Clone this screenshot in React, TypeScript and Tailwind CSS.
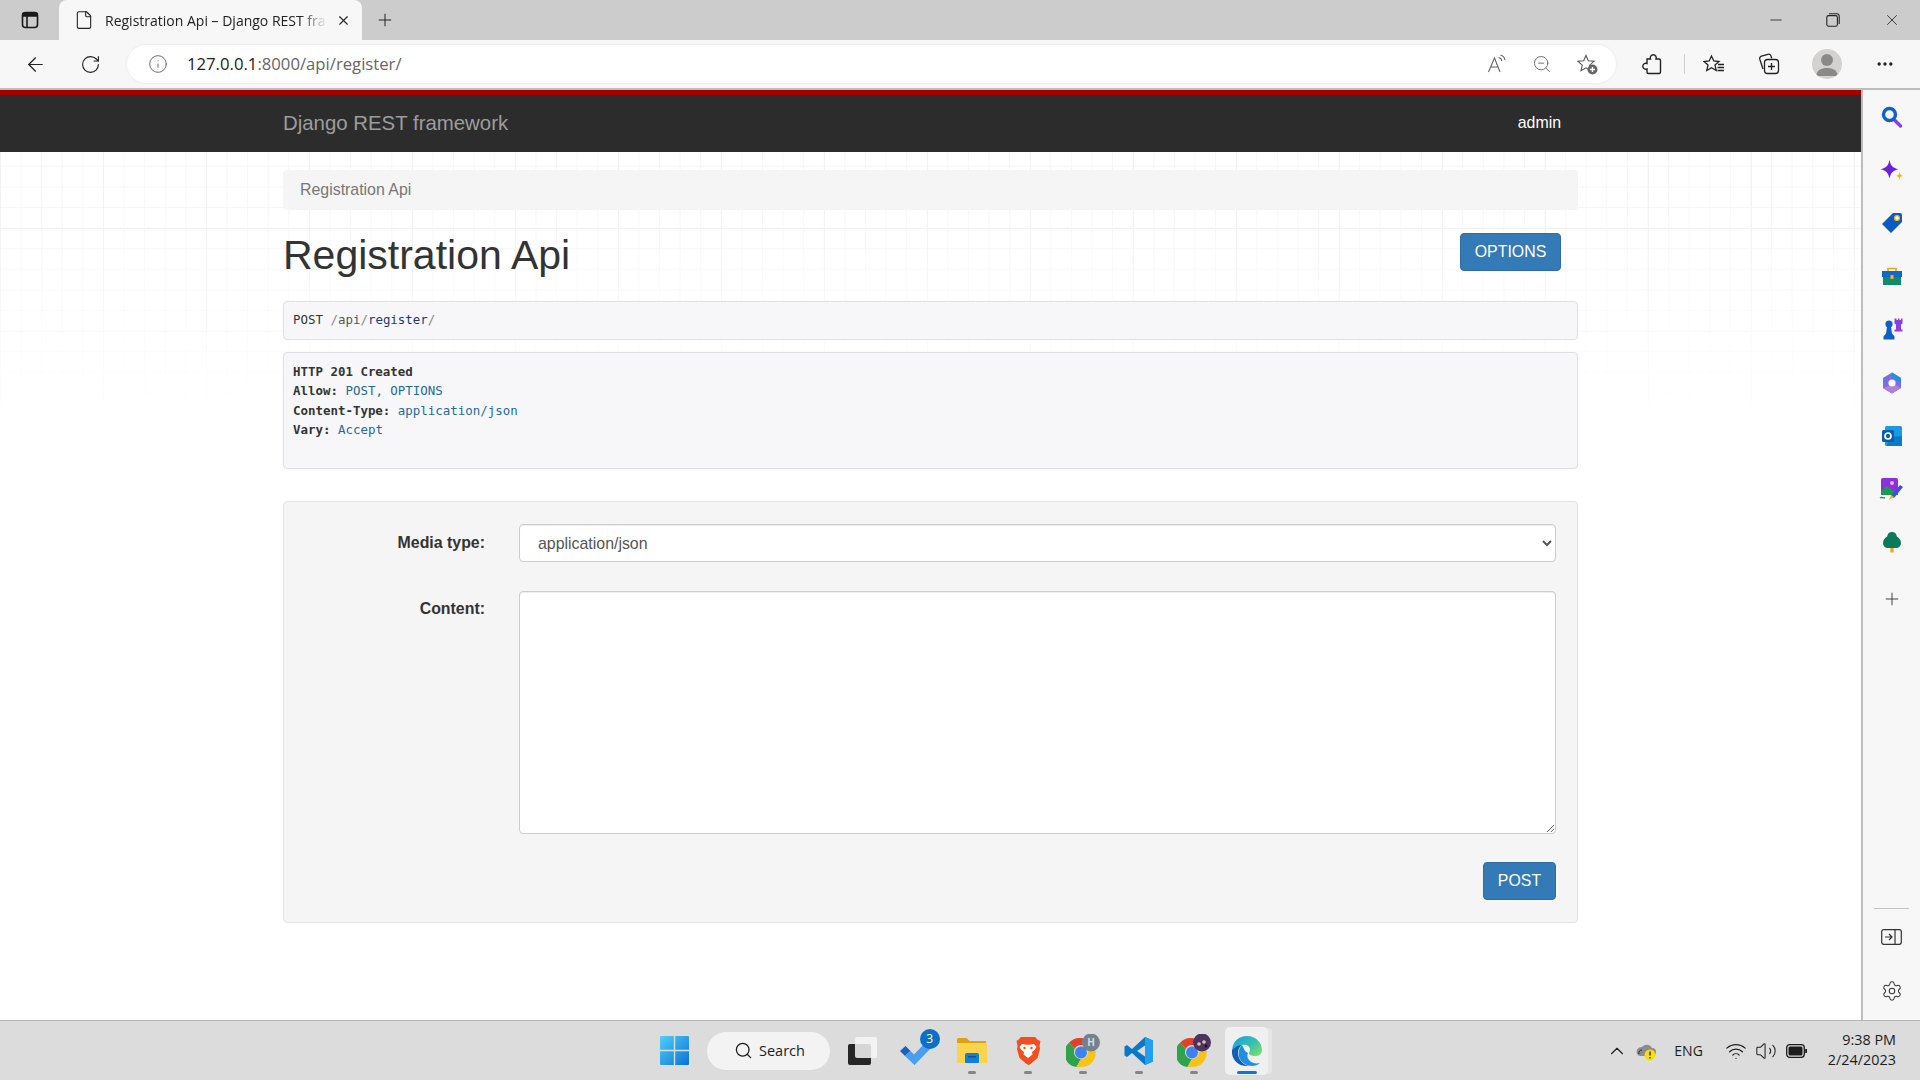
import { ReactNode } from 'react';
import { ArrowLeft, RotateCw, Info, ZoomOut, Settings, Plus, X, Minus, Search, ChevronUp, Wifi, Volume2, File, Ellipsis } from 'lucide-react';

// edge chrome -----------------------------------------------------------

function TabStrip() {
  return (
    <div className="flex h-[40px] shrink-0 items-end bg-[#cccccc] font-['Open_Sans',sans-serif] text-[#222]">
      <div className="flex h-[40px] w-[59px] items-center justify-center pb-[1px]">
        <svg width="18" height="18" viewBox="0 0 18 18" fill="none" stroke="#1a1a1a" strokeWidth="1.6">
          <rect x="1.5" y="1.5" width="15" height="15" rx="3" />
          <path d="M2 5h14V2.5H2z" fill="#1a1a1a" />
          <path d="M6 5v11" />
        </svg>
      </div>
      <div className="flex h-[40px] w-[303px] items-center rounded-t-[8px] bg-[#f7f7f7] pl-[15px]">
        <File size={20} strokeWidth={1.3} color="#222" />
        <span className="ml-[11px] w-[222px] overflow-hidden whitespace-nowrap text-[14px] [mask-image:linear-gradient(to_right,#000_88%,transparent_100%)]">
          Registration Api – Django REST framework
        </span>
        <X size={15} strokeWidth={1.8} className="ml-[9px]" />
      </div>
      <div className="flex h-[40px] w-[46px] items-center justify-center">
        <Plus size={20} strokeWidth={1.2} />
      </div>
      <div className="ml-auto flex h-[40px] items-center pr-[19px]">
        <Minus size={18} strokeWidth={1.1} className="mr-[41px]" />
        <svg width="14" height="14" viewBox="0 0 14 14" fill="none" stroke="#222" strokeWidth="1.1" className="mr-[43px]">
          <rect x="0.8" y="2.6" width="10.6" height="10.6" rx="1.8" />
          <path d="M3 .8h8a2.2 2.2 0 0 1 2.2 2.2v8" />
        </svg>
        <X size={18} strokeWidth={1.1} />
      </div>
    </div>
  );
}

function AddressBar() {
  return (
    <div className="flex h-[50px] shrink-0 items-start border-b-[2px] border-[#bdbdbd] bg-[#f7f7f7] font-['Open_Sans',sans-serif] text-[#222]">
      <div className="flex h-[48px] items-center pl-[24px]">
        <ArrowLeft size={23} strokeWidth={1.3} />
        <RotateCw size={21} strokeWidth={1.3} className="ml-[33px]" />
      </div>
      <div className="ml-[26px] mt-[5px] flex h-[38px] w-[1489px] items-center rounded-[19px] bg-white pl-[21px] shadow-[0_0_3px_rgba(0,0,0,0.08)]">
        <Info size={20} strokeWidth={1} color="#555" />
        <span className="ml-[19px] text-[16.7px]">
          127.0.0.1<span className="text-[#666]">:8000/api/register/</span>
        </span>
        <div className="ml-auto flex items-center gap-[25px] pr-[18px]">
          <svg width="20" height="20" viewBox="0 0 20 20" fill="none" stroke="#666" strokeWidth="1.1">
            <path d="M1.5 18 7.5 4l5.500 14M3.800 13h7.600" />
            <path d="M11.500 3.500c1.800.4 3 1.800 3.300 3.500M13.500 1c2.500.7 4 2.600 4.500 5" />
          </svg>
          <ZoomOut size={20} strokeWidth={1.1} color="#666" />
          <svg width="21" height="21" viewBox="0 0 21 21" fill="none" stroke="#555" strokeWidth="1.1">
            <path d="M9 1.500 11.300 6.800l5.700.5-4.300 3.800 1.300 5.600L9 13.800l-5 2.900 1.300-5.600L1 7.300l5.700-.5z" />
            <circle cx="15.500" cy="15.500" r="5" fill="#666" stroke="none" />
            <path d="M15.500 13v5M13 15.500h5" stroke="#fff" strokeWidth="1.300" />
          </svg>
        </div>
      </div>
      <div className="flex h-[48px] items-center">
        <svg width="22" height="22" viewBox="0 0 22 22" fill="none" stroke="#222" strokeWidth="1.400" className="ml-[25px]">
          <path d="M6 6h3.500a3 3 0 1 1 5.500 0H18a1.500 1.500 0 0 1 1.500 1.500V19a1.500 1.500 0 0 1-1.500 1.500H7.500A1.500 1.500 0 0 1 6 19v-3a3 3 0 1 1 0-5.500z" />
        </svg>
        <div className="ml-[21px] h-[20px] w-px bg-[#cfcfcf]" />
        <svg width="22" height="21" viewBox="0 0 22 21" fill="none" stroke="#222" strokeWidth="1.3" className="ml-[18px]">
          <path d="M8.500 2 10.800 7l5.200.5-4 3.600 1.200 5.400-4.700-2.800-4.700 2.800 1.200-5.400-4-3.600L6.200 7z" />
          <path d="M15 10.500h6M14.500 13.500h6.500M14.500 16.500h6.500" />
        </svg>
        <svg width="22" height="22" viewBox="0 0 22 22" fill="none" stroke="#222" strokeWidth="1.3" className="ml-[33px]">
          <path d="M5 16 1.800 6.200a2.500 2.500 0 0 1 1.700-3.100l6.400-1.800a2.500 2.500 0 0 1 3 1.600l.8 2.400" />
          <rect x="6.500" y="6.500" width="14" height="14" rx="3" />
          <path d="M13.500 10v7M10 13.500h7" />
        </svg>
        <div className="ml-[32px] flex h-[30px] w-[30px] items-center justify-center overflow-hidden rounded-full bg-[#d3d2d0]">
          <svg width="30" height="30" viewBox="0 0 30 30" fill="#8b8986">
            <circle cx="15" cy="11" r="6" />
            <path d="M4 27c1-6 5-8 11-8s10 2 11 8z" />
          </svg>
        </div>
        <Ellipsis size={20} strokeWidth={2} className="ml-[33px]" />
      </div>
    </div>
  );
}

// right side bar ----------------------------------------------------------

const sideIcons: ReactNode[] = [
  <svg key="search" width="22" height="22" viewBox="0 0 22 22" fill="none">
    <path d="M13 13.500 19.500 20" stroke="#8a3ee0" strokeWidth="3.400" strokeLinecap="round" />
    <circle cx="8.500" cy="8.500" r="6" stroke="#0f5fd0" strokeWidth="3.400" />
  </svg>,
  <svg key="spark" width="24" height="22" viewBox="1.500 1.500 21.500 19.500">
    <path d="M10 2c1 5.500 3 7.400 8 8.500-5 1.200-7 3-8 8.700-1-5.700-3-7.500-8-8.700 5-1.100 7-3 8-8.500z" fill="#6b21d8" />
    <path d="M19 13c.4 2.200 1.200 3 3.400 3.500-2.200.5-3 1.300-3.400 3.500-.4-2.200-1.200-3-3.400-3.500 2.200-.5 3-1.300 3.400-3.500z" fill="#f5b50c" />
  </svg>,
  <svg key="tag" width="22" height="22" viewBox="0 0 22 22">
    <path d="M12 1h7a2 2 0 0 1 2 2v7L10 21 1 12z" fill="#0b5bc4" />
    <circle cx="16" cy="6" r="2.400" fill="#fff" stroke="#f5b50c" strokeWidth="1.400" />
  </svg>,
  <svg key="tools" width="22" height="20" viewBox="0 0 22 20">
    <path d="M7 5V2.500h8V5" fill="none" stroke="#e3a81c" strokeWidth="1.600" />
    <rect x="1" y="5" width="20" height="6" fill="#1266c9" />
    <rect x="2" y="11" width="18" height="8" fill="#0f8a6d" />
    <rect x="9.500" y="9" width="3" height="4" fill="#f5b50c" />
  </svg>,
  <svg key="chess" width="24" height="24" viewBox="0 0 24 24">
    <path d="M14.500 1.500h2v1.500h1.500V1.500h1.500V3H21V1.500h1.500v5l-1.500 1v5h1.500v2h-8v-2H16v-5l-1.500-1z" fill="#8b3fe0" />
    <circle cx="9" cy="7" r="3.600" fill="#0f5fc8" />
    <path d="M7 10h4l1 6.500 2.500 3v3H3.500v-3l2.500-3z" fill="#0f5fc8" />
  </svg>,
  <svg key="m365" width="22" height="24" viewBox="0 0 22 24" fill="none">
    <path d="M11 1.500 20 7v10l-9 5.500L2 17V7z" fill="#7b6ee0" />
    <path d="M11 1.500 20 7v5l-5-3-4-1.500z" fill="#2a8be0" />
    <path d="M2 17l9 5.500 9-5.500-5-3-8 1z" fill="#b17fd8" />
    <circle cx="11" cy="12" r="3.600" fill="#f7f7f7" />
  </svg>,
  <svg key="outlook" width="22" height="22" viewBox="0 0 22 22">
    <rect x="4" y="1" width="17" height="20" rx="1.500" fill="#1a9be0" />
    <path d="M8 12l13-1v10H6z" fill="#0f78c8" />
    <rect x="1" y="5" width="12" height="12" rx="1.500" fill="#0a5cb0" />
    <circle cx="7" cy="11" r="3" fill="none" stroke="#fff" strokeWidth="1.700" />
  </svg>,
  <svg key="paint" width="25" height="24" viewBox="0 0 25 24">
    <rect x="2" y="1" width="17" height="17" rx="2" fill="#8b2fe0" />
    <circle cx="13" cy="6" r="2" fill="#f3b0e0" />
    <path d="M2 14l6-5 11 8v1H2z" fill="#1a9a50" />
    <path d="M12 19 21 8l3 2-9 11z" fill="#3b50d8" />
    <path d="M10 23l2-5 3 2z" fill="#f0b020" />
    <path d="M1 21c2-2 3 1 5-.5" fill="none" stroke="#168a50" strokeWidth="1.200" />
  </svg>,
  <svg key="tree" width="22" height="22" viewBox="0 0 22 22">
    <rect x="9.300" y="15" width="3.400" height="6.500" fill="#f0a818" />
    <path d="M11 1c3 0 4.500 2 4.800 4.500C18.600 7 20 9.500 20 12c0 3-2.500 5-5 5H7c-2.500 0-5-2-5-5 0-2.500 1.400-5 4.200-6.500C6.500 3 8 1 11 1z" fill="#0b7a5a" />
  </svg>,
];

function SideBar() {
  return (
    <div className="flex w-[59px] shrink-0 flex-col items-center border-l-[2px] border-[#bdbdbd] bg-[#f7f7f7] text-[#333]">
      {sideIcons.map((icon, i) => (
        <div key={i} className="flex h-[53.2px] w-full items-center justify-center">{icon}</div>
      ))}
      <div className="mt-[4px] flex h-[53.2px] w-full items-center justify-center">
        <Plus size={20} strokeWidth={1.1} />
      </div>
      <div className="mt-auto h-px w-[35px] bg-[#c4c4c4]" />
      <div className="mt-[18px] flex h-[20px] w-full items-center justify-center">
        <svg width="21" height="16" viewBox="0 0 21 16" fill="none" stroke="#333" strokeWidth="1.200">
          <rect x="0.700" y="0.700" width="19.600" height="14.600" rx="2" />
          <path d="M14 1v14M4 8h7M8 5l3 3-3 3" />
        </svg>
      </div>
      <Settings size={22} strokeWidth={1.1} className="mb-[18px] mt-[33px]" />
    </div>
  );
}

// django rest framework page ----------------------------------------------

function BrowsablePage() {
  return (
    <div className="min-w-0 flex-1 bg-white bg-[image:linear-gradient(to_bottom,rgba(255,255,255,0)_110px,#fff_335px),linear-gradient(#f2f2f2_1px,transparent_1px),linear-gradient(90deg,#f2f2f2_1px,transparent_1px),linear-gradient(#f7f7f7_1px,transparent_1px),linear-gradient(90deg,#f7f7f7_1px,transparent_1px)] bg-[size:100%_100%,103px_103px,103px_103px,20.6px_20.6px,20.6px_20.6px] bg-[position:0_0,0_35px,0_35px,0_14px,0_14px] font-['Liberation_Sans',sans-serif] text-[15.9px] text-[#333]">
      <nav className="h-[62px] border-t-[5px] border-[#a30000] bg-[#2c2c2c]">
        <div className="mx-auto flex h-[57px] w-[1295px] items-center justify-between pr-[17px]">
          <span className="text-[20.4px] text-[#9d9d9d]">Django REST framework</span>
          <span className="pb-[1px] text-white">admin</span>
        </div>
      </nav>

      <div className="mx-auto w-[1295px]">
        <div className="mt-[18px] flex h-[40px] items-center rounded-[4px] bg-[#f5f5f5] px-[17px] text-[#777]">
          Registration Api
        </div>

        <div className="flex h-[91px] items-center justify-between pr-[17px]">
          <h1 className="pb-[1px] text-[41px] leading-none">Registration Api</h1>
          <button className="mb-[8px] h-[38px] w-[101px] rounded-[4px] border border-[#2e6da4] bg-[#337ab7] text-white">
            OPTIONS
          </button>
        </div>

        <div className="flex h-[39px] items-center rounded-[4px] border border-[#dfdfe6] bg-[#f7f7f9] px-[9px] font-['DejaVu_Sans_Mono',monospace] text-[12.45px] text-[#888]">
          <b className="font-medium text-[#333]">POST</b>&nbsp;/<span className="text-[#555]">api</span>/<span className="text-[#1c3a78]">register</span>/
        </div>

        <div className="mt-[12px] h-[117px] rounded-[4px] border border-[#dfdfe6] bg-[#f7f7f9] px-[9px] pt-[9px] font-['DejaVu_Sans_Mono',monospace] text-[12.45px] leading-[19.4px] text-[#1f6a9a]">
          <div className="font-bold text-[#333]">HTTP 201 Created</div>
          <div><b className="text-[#333]">Allow:</b> POST, OPTIONS</div>
          <div><b className="text-[#333]">Content-Type:</b> application/json</div>
          <div><b className="text-[#333]">Vary:</b> Accept</div>
        </div>

        <form className="mt-[32px] h-[422px] rounded-[4px] border border-[#e3e3e3] bg-[#f5f5f5] pr-[21px] pt-[22px]">
          <div className="flex">
            <label className="w-[201px] pt-[7px] text-right font-bold">Media type:</label>
            <select defaultValue="application/json" className="ml-[34px] h-[38px] flex-1 rounded-[4px] border border-[#cccccc] bg-white pl-[14px] pr-[18px] text-[#555] shadow-[inset_0_1px_1px_rgba(0,0,0,0.075)]">
              <option>application/json</option>
            </select>
          </div>
          <div className="mt-[29px] flex">
            <label className="w-[201px] pt-[6px] text-right font-bold">Content:</label>
            <textarea className="ml-[34px] h-[243px] flex-1 rounded-[4px] border border-[#cccccc] bg-white shadow-[inset_0_1px_1px_rgba(0,0,0,0.075)]" />
          </div>
          <div className="mt-[28px] flex justify-end">
            <button type="button" className="h-[38px] w-[73px] rounded-[4px] border border-[#2e6da4] bg-[#337ab7] text-white">
              POST
            </button>
          </div>
        </form>
      </div>
    </div>
  );
}

// windows taskbar ------------------------------------------------------------

function Chrome({ badge }: { badge: ReactNode }) {
  return (
    <svg width="34" height="34" viewBox="0 0 34 34">
      <g transform="translate(0 4)">
        <path d="M15 0a14 14 0 0 1 12.100 7H15a7 7 0 0 0-6.100 3.500L3 4.800A14 14 0 0 1 15 0z" fill="#e2402f" />
        <path d="M3 4.800l5.900 5.700a7 7 0 0 0 6 10.500L10.500 29A14 14 0 0 1 3 4.800z" fill="#2fa24c" />
        <path d="M27.100 7A14 14 0 0 1 15 29h-4.500l4.400-8a7 7 0 0 0 6.100-10.500z" fill="#f6c417" />
        <circle cx="15" cy="14.500" r="6" fill="#3f82ee" />
      </g>
      {badge}
    </svg>
  );
}

const taskIcons: { key: string; node: ReactNode; running?: boolean }[] = [
  {
    key: 'taskview',
    node: (
      <svg width="30" height="30" viewBox="0 0 30 30">
        <rect x="1" y="8" width="23" height="21" rx="2" fill="#262626" />
        <rect x="8" y="1" width="22" height="21" rx="2" fill="#f6f6f6" fillOpacity="0.85" />
      </svg>
    ),
  },
  {
    key: 'todo',
    node: (
      <svg width="36" height="30" viewBox="0 0 36 30">
        <path d="M1 15l5.500-5 5 5-5.500 5z" fill="#1b5fc0" />
        <path d="M6 20 11.500 15l3.500 3.500L26 7l6 5-16.500 17z" fill="#4a9eec" />
      </svg>
    ),
  },
  {
    key: 'explorer',
    running: true,
    node: (
      <svg width="32" height="27" viewBox="0 0 32 27">
        <path d="M1 2.500A1.500 1.500 0 0 1 2.500 1h8l3 3H30v5H1z" fill="#dfa011" />
        <path d="M1 6h30v19a1 1 0 0 1-1 1H2a1 1 0 0 1-1-1z" fill="#fcd34d" />
        <path d="M9 18a2 2 0 0 1 2-2h10a2 2 0 0 1 2 2v8H9z" fill="#0f7fd8" />
        <rect x="12" y="19" width="8" height="1.400" fill="#0a4f96" />
      </svg>
    ),
  },
  {
    key: 'brave',
    running: true,
    node: (
      <svg width="26" height="30" viewBox="0 0 26 30">
        <path d="M6 1h14l3 3 2.500 1-1 5 .5 3-2.500 9-7 6-2 1-2-1-7-6-2.500-9 .5-3-1-5L3 4z" fill="#f0501f" />
        <path d="M7 8l4 .8h4l4-.8 2.500 3-2 3-2.500 2 .5 2.500L13 22l-4.500-3.500.5-2.500-2.500-2-2-3z" fill="#fff" />
        <circle cx="9.500" cy="12" r="1.200" fill="#f0501f" />
        <circle cx="16.500" cy="12" r="1.200" fill="#f0501f" />
      </svg>
    ),
  },
  {
    key: 'chrome-h',
    running: true,
    node: (
      <Chrome
        badge={
          <g>
            <circle cx="25" cy="8.500" r="9" fill="#75828c" />
            <text x="25" y="12" textAnchor="middle" fontSize="10" fontWeight="700" fill="#d7dde2" fontFamily="Open Sans">H</text>
          </g>
        }
      />
    ),
  },
  {
    key: 'vscode',
    running: true,
    node: (
      <svg width="30" height="30" viewBox="0 0 30 30">
        <path d="M21 1 29 4.500v21L21 29 8 17l-5 4-2.500-1.500v-9L3 9l5 4z" fill="#0a78c9" />
        <path d="M21 1l8 3.500v21L21 29z" fill="#21a0ee" />
        <path d="M21 9.500 13 15l8 5.500z" fill="#dcdcdc" />
      </svg>
    ),
  },
  {
    key: 'chrome-photo',
    running: true,
    node: (
      <Chrome
        badge={
          <g>
            <circle cx="25" cy="8.500" r="9" fill="#4b3560" />
            <circle cx="22" cy="10" r="1.800" fill="#d9c3a8" />
            <circle cx="27" cy="8" r="1.800" fill="#d9c3a8" />
            <circle cx="29" cy="12" r="1.400" fill="#1a1222" />
          </g>
        }
      />
    ),
  },
];

function TaskBar() {
  return (
    <div className="flex h-[60px] shrink-0 items-center border-t-[1px] border-[#b5b5b5] bg-[#dcdcdc] font-['Open_Sans',sans-serif] text-[#1c1c1c]">
      <svg width="29" height="29" viewBox="0 0 29 29" className="ml-[660px]">
        <defs>
          <linearGradient id="win" x1="0" y1="0" x2="1" y2="1">
            <stop offset="0" stopColor="#4fd0fb" />
            <stop offset="1" stopColor="#0a72d4" />
          </linearGradient>
        </defs>
        <path d="M0 1a1 1 0 0 1 1-1h12.800v13.800H0zM15.200 0H28a1 1 0 0 1 1 1v12.800H15.200zM0 15.200h13.800V29H1a1 1 0 0 1-1-1zM15.200 15.200H29V28a1 1 0 0 1-1 1H15.200z" fill="url(#win)" />
      </svg>
      <div className="ml-[18px] flex h-[38px] w-[123px] items-center rounded-[19px] bg-[#f3f3f3] pl-[27px] text-[14.5px]">
        <Search size={19} strokeWidth={1.6} />
        <span className="ml-[6px]">Search</span>
      </div>
      <div className="ml-[4px] flex">
        {taskIcons.map(t => (
          <div key={t.key} className="relative flex h-[59px] w-[55.4px] items-center justify-center">
            {t.node}
            {t.key === 'todo' && (
              <span className="absolute right-[5px] top-[8px] flex h-[20px] w-[20px] items-center justify-center rounded-full bg-[#0a6fc9] text-[12px] text-white">3</span>
            )}
            {t.running && <span className="absolute bottom-[6px] h-[3px] w-[8px] rounded-full bg-[#858585]" />}
          </div>
        ))}
        <div className="relative ml-[3px] flex h-[48px] w-[43px] items-center justify-center self-center rounded-[5px] bg-[#f0f0f0] pl-[2px] shadow-[5px_0_0_-1px_#e6e6e6]">
          <svg width="32" height="32" viewBox="0 0 32 32">
            <defs>
              <linearGradient id="edge" x1="0" y1="0" x2="1" y2="0.800">
                <stop offset="0" stopColor="#1b9de2" />
                <stop offset="0.600" stopColor="#35c1b0" />
                <stop offset="1" stopColor="#7fdc6a" />
              </linearGradient>
            </defs>
            <path d="M1 15C2 6 8 1 16 1c9 0 15 7 15 14 0 4-3 6-7 6-3 0-6-1-6-3 0-1 1-1.500 1-3.500C19 11 15 9 11 10 6 11 2 13 1 15z" fill="url(#edge)" />
            <path d="M1 15c2-3 6-5 10-5-4 3-5 8-3 13 1.500 3.500 5 7 10 8C8 32 0 25 1 15z" fill="#0f5fb4" />
            <path d="M11 10c-3 3-4 8-3 12 2 6 8 9 13 9 3 0 6-1 8-3-4 1-9 0-11-3-2-2-2-5-1-7-3-1-4-4-6-8z" fill="#1f8fe0" />
          </svg>
          <span className="absolute bottom-[1px] h-[3px] w-[20px] rounded-full bg-[#0a78d4]" />
        </div>
      </div>
      <div className="ml-auto flex items-center pr-[24px]">
        <ChevronUp size={22} strokeWidth={1.2} />
        <svg width="22" height="20" viewBox="0 0 22 20" className="ml-[7px]">
          <path d="M2 13a5 5 0 0 1 5-7 6 6 0 0 1 10 1 4 4 0 0 1 0 8H6a4 4 0 0 1-4-2z" fill="#8c8c8c" />
          <path d="M4 13a3 3 0 0 1 3-4" stroke="#222" fill="none" />
          <circle cx="15" cy="14" r="5.500" fill="#f7df0b" />
          <path d="M15 10.500v4M15 16v1.400" stroke="#222" strokeWidth="1.300" />
        </svg>
        <span className="ml-[17px] text-[14px]">ENG</span>
        <Wifi size={22} strokeWidth={1.3} className="ml-[22px]" />
        <Volume2 size={22} strokeWidth={1.1} className="ml-[8px]" />
        <svg width="21" height="14" viewBox="0 0 21 14" className="ml-[9px]">
          <rect x="0.700" y="0.700" width="17.600" height="12.600" rx="3" fill="none" stroke="#1c1c1c" strokeWidth="1.300" />
          <rect x="2.500" y="2.500" width="14" height="9" rx="1.500" fill="#1c1c1c" />
          <rect x="19.200" y="5" width="1.800" height="4" fill="#1c1c1c" />
        </svg>
        <div className="ml-[21px] pb-[2px] text-right text-[14.4px] leading-[20px]">
          <div>9:38 PM</div>
          <div>2/24/2023</div>
        </div>
      </div>
    </div>
  );
}

export default function App() {
  return (
    <div className="flex h-screen w-full flex-col overflow-hidden bg-white">
      <TabStrip />
      <AddressBar />
      <div className="flex min-h-0 flex-1">
        <BrowsablePage />
        <SideBar />
      </div>
      <TaskBar />
    </div>
  );
}
